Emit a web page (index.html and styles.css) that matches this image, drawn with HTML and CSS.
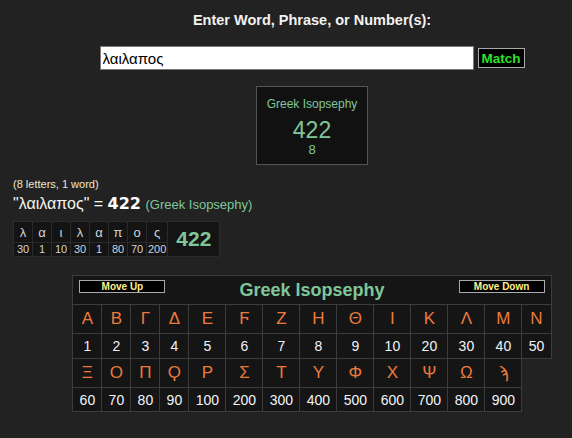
FILE: index.html
```html
<!DOCTYPE html>
<html>
<head>
<meta charset="utf-8">
<link rel="stylesheet" href="styles.css">
</head>
<body>
<div class="top">
  <div class="title">Enter Word, Phrase, or Number(s):</div>
  <div class="form">
    <input class="word" type="text" value="λαιλαπος">
    <button class="match">Match</button>
  </div>
  <div class="box">
    <div class="bname">Greek Isopsephy</div>
    <div class="bval">422</div>
    <div class="bcnt">8</div>
  </div>
</div>
<div class="result">
  <div class="count">(8 letters, 1 word)</div>
  <div class="eq"><span class="q">"λαιλαπος"</span> = <b class="big">422</b> <span class="g">(Greek Isopsephy)</span></div>
  <table class="mini">
    <tr class="ml"><td>λ</td><td>α</td><td>ι</td><td>λ</td><td>α</td><td>π</td><td>ο</td><td>ς</td><td class="tot" rowspan="2">422</td></tr>
    <tr class="mn"><td>30</td><td>1</td><td>10</td><td>30</td><td>1</td><td>80</td><td>70</td><td>200</td></tr>
  </table>
</div>
<div class="chart-wrap">
  <table class="chart">
    <colgroup>
      <col class="cn"><col class="cn"><col class="cn"><col class="cn">
      <col class="cw"><col class="cw"><col class="cw"><col class="cw"><col class="cw">
      <col class="cw"><col class="cw"><col class="cw"><col class="cw">
      <col class="cn">
    </colgroup>
    <tr class="hd"><td colspan="14">
      <div class="hdr">
        <button class="mv">Move Up</button>
        <span class="ctitle">Greek Isopsephy</span>
        <button class="mv">Move Down</button>
      </div>
    </td></tr>
    <tr class="lt"><td>Α</td><td>Β</td><td>Γ</td><td>Δ</td><td>Ε</td><td>Ϝ</td><td>Ζ</td><td>Η</td><td>Θ</td><td>Ι</td><td>Κ</td><td>Λ</td><td>Μ</td><td>Ν</td></tr>
    <tr class="nm"><td>1</td><td>2</td><td>3</td><td>4</td><td>5</td><td>6</td><td>7</td><td>8</td><td>9</td><td>10</td><td>20</td><td>30</td><td>40</td><td>50</td></tr>
    <tr class="lt"><td>Ξ</td><td>Ο</td><td>Π</td><td>Ϙ</td><td>Ρ</td><td>Σ</td><td>Τ</td><td>Υ</td><td>Φ</td><td>Χ</td><td>Ψ</td><td>Ω</td><td>ϡ</td></tr>
    <tr class="nm"><td>60</td><td>70</td><td>80</td><td>90</td><td>100</td><td>200</td><td>300</td><td>400</td><td>500</td><td>600</td><td>700</td><td>800</td><td>900</td></tr>
  </table>
</div>
</body>
</html>
```
FILE: styles.css
```css
html, body {
  background: #222222;
}
body {
  margin: 0;
  overflow: hidden;
  color: #ffffff;
  font-family: "Liberation Sans", "DejaVu Sans", Arial, sans-serif;
}
.top {
  width: 520px;
  margin-left: 52px;
  padding-top: 12px;
  text-align: center;
}
.title {
  font-weight: bold;
  font-size: 14.5px;
  line-height: 16px;
  color: #f2f2f2;
}
.form {
  display: flex;
  justify-content: center;
  align-items: center;
  gap: 4px;
  margin-top: 18px;
  height: 24px;
}
.word {
  width: 374px;
  height: 24px;
  box-sizing: border-box;
  margin: 0;
  padding: 0 2px;
  border: 1px solid #7a7a7a;
  background: #ffffff;
  color: #000000;
  font-family: "Liberation Sans", "DejaVu Sans", sans-serif;
  font-size: 15px;
  outline: none;
}
.match {
  width: 47px;
  height: 20px;
  box-sizing: border-box;
  margin: 0;
  padding: 0;
  border: 1px solid #aaaaaa;
  background: #000000;
  color: #2ee02e;
  font-family: "Liberation Sans", sans-serif;
  font-weight: bold;
  font-size: 13.5px;
}
.box {
  width: 112px;
  box-sizing: border-box;
  margin: 16px auto 0;
  padding: 10px 0 7px;
  border: 1px solid #555555;
  background: #111111;
  color: #80c89a;
}
.bname {
  font-size: 12px;
  line-height: 14px;
}
.bval {
  font-size: 23px;
  line-height: 26px;
  margin-top: 6px;
}
.bcnt {
  font-size: 13px;
  line-height: 14px;
}
.result {
  padding-left: 13px;
  margin-top: 13px;
}
.count {
  font-size: 11px;
  line-height: 13px;
  color: #eee8c8;
}
.eq {
  margin-top: 3px;
  font-size: 16px;
  line-height: 20px;
  color: #f4f4f4;
}
.big {
  font-family: "DejaVu Sans", sans-serif;
  font-weight: bold;
  font-size: 16px;
  color: #ffffff;
}
.g {
  color: #7fc79b;
  font-size: 13px;
}
.mini {
  margin-top: 6px;
  border-collapse: collapse;
  background: #141414;
}
.mini td {
  border: 1px solid #2a2a2a;
  padding: 0 1px;
  min-width: 16px;
  text-align: center;
  color: #d0d4dc;
}
.mini .ml td {
  font-size: 13px;
  height: 20px;
}
.mini .mn td {
  font-size: 11px;
  height: 13px;
  line-height: 13px;
}
.mini td.tot {
  font-size: 21px;
  font-weight: bold;
  color: #7fc79b;
  padding: 0 8px;
}
.chart-wrap {
  width: 520px;
  margin-left: 52px;
  margin-top: 18px;
}
.chart {
  margin: 0 auto;
  width: 478px;
  table-layout: fixed;
  border-collapse: collapse;
  background: transparent;
}
.cn {
  width: 29px;
}
.cw {
  width: 37px;
}
.chart td {
  border: 1px solid #3c3c3c;
  background: #151515;
  text-align: center;
  padding: 0;
}
.chart .hd td {
  height: 28px;
  padding: 0;
}
.hdr {
  display: flex;
  justify-content: space-between;
  align-items: flex-start;
  padding: 0 6px 0 6px;
  height: 28px;
}
.mv {
  width: 86px;
  height: 13px;
  margin-top: 4px;
  padding: 0;
  box-sizing: border-box;
  border: 1px solid #aaaaaa;
  background: #000000;
  color: #ffee88;
  font-family: "Liberation Sans", sans-serif;
  font-weight: bold;
  font-size: 10px;
  line-height: 11px;
}
.ctitle {
  font-weight: bold;
  font-size: 18px;
  line-height: 28px;
  color: #7fc79b;
}
.chart .lt td {
  height: 28px;
  font-size: 17px;
  color: #ec7a3c;
}
.chart .nm td {
  height: 24px;
  font-size: 14px;
  color: #f2f4f8;
}
.chart tr:last-child td {
  height: 23px;
}
```
